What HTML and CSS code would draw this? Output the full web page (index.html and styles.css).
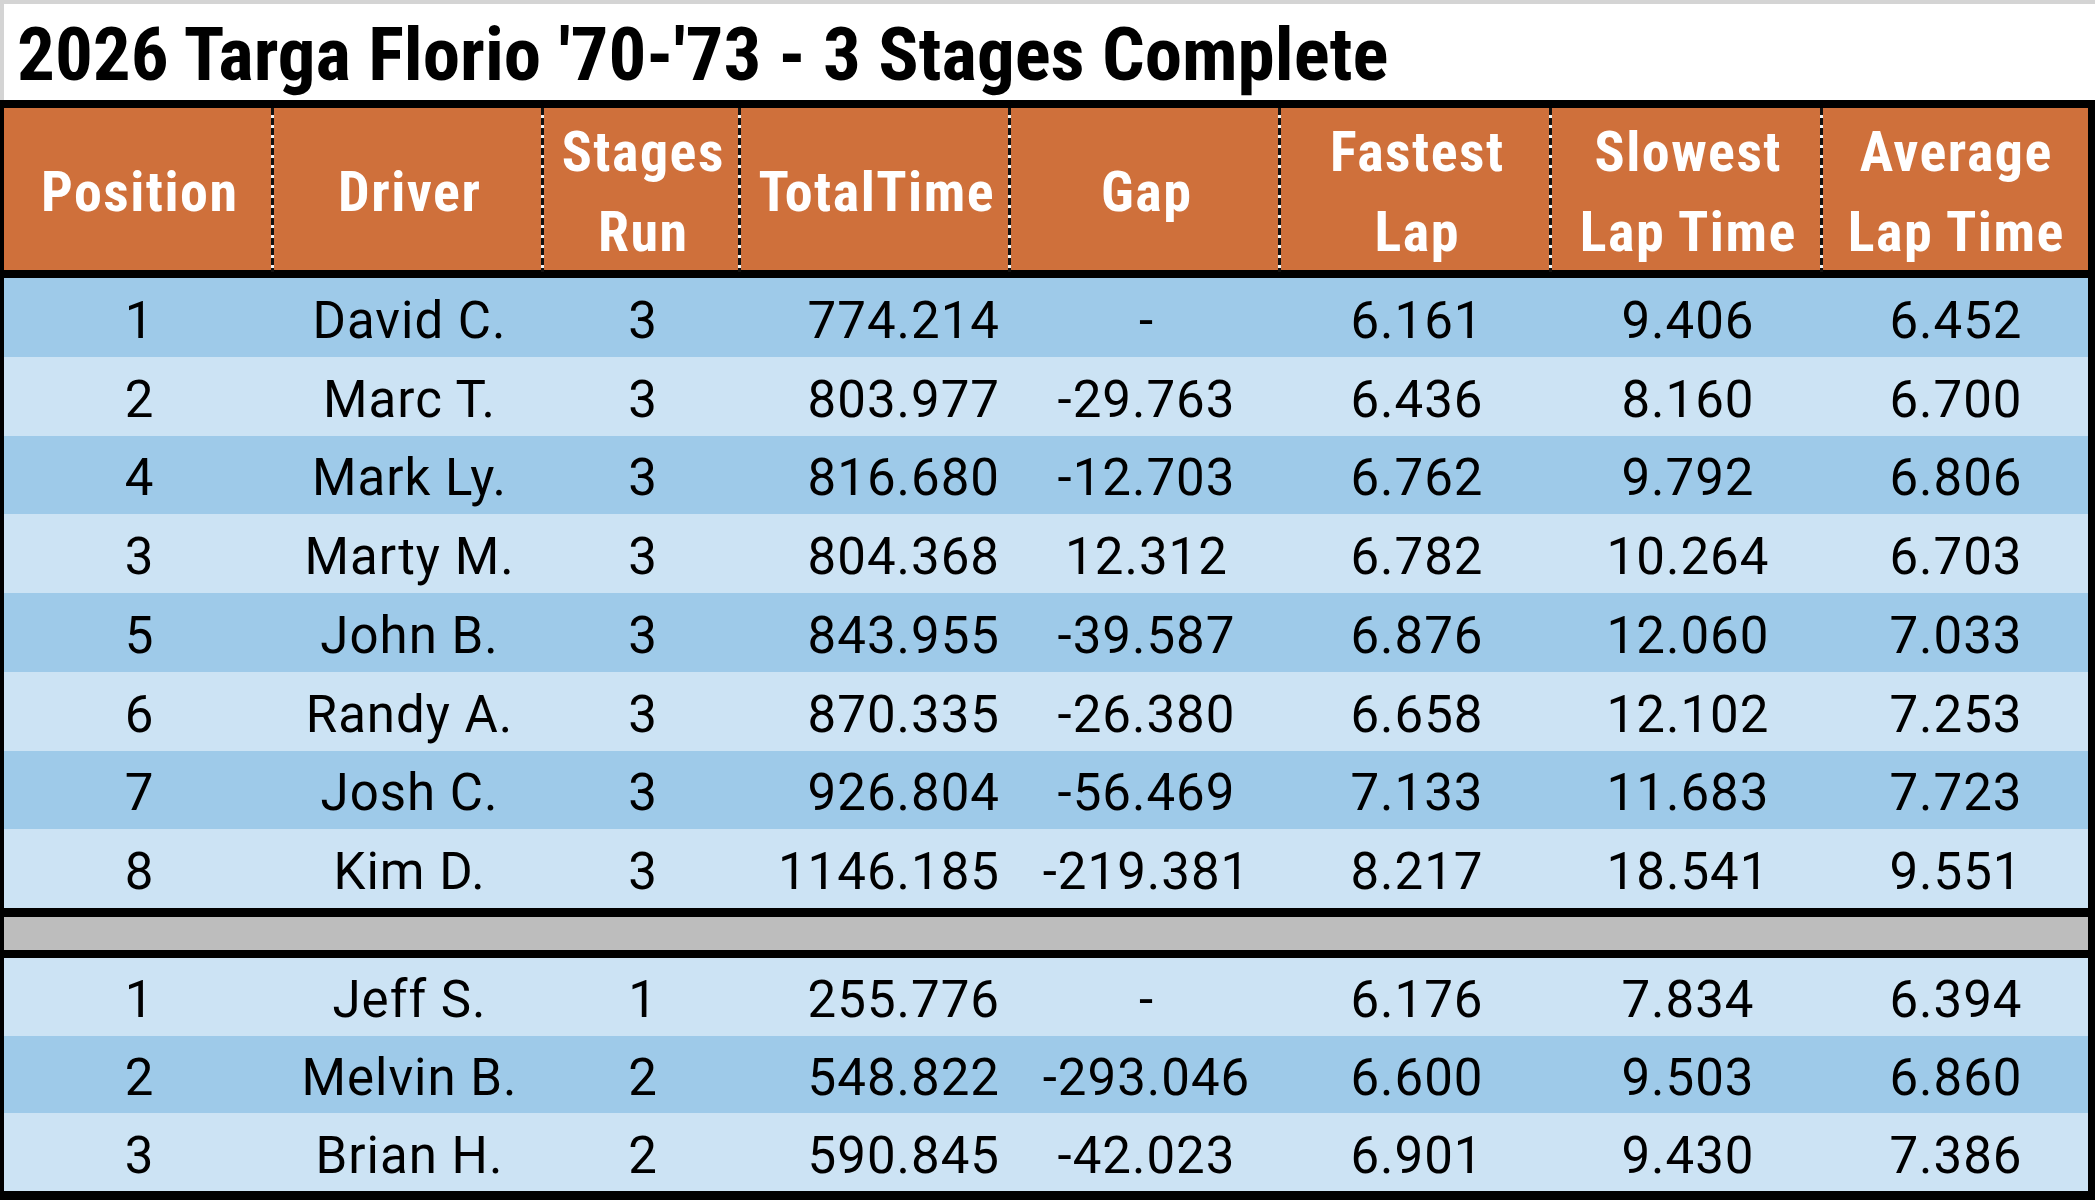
FILE: index.html
```html
<!DOCTYPE html>
<html lang="en">
<head>
<meta charset="utf-8">
<title>2026 Targa Florio '70-'73 - 3 Stages Complete</title>
<link rel="stylesheet" href="styles.css">
</head>
<body>
<div class="sheet">
  <h1 class="title">2026 Targa Florio '70-'73 - 3 Stages Complete</h1>
  <div class="results">
    <div class="row head">
      <div class="cell dash">Position</div>
      <div class="cell dash">Driver</div>
      <div class="cell dash">Stages<br>Run</div>
      <div class="cell dash">TotalTime</div>
      <div class="cell dash">Gap</div>
      <div class="cell dash">Fastest<br>Lap</div>
      <div class="cell dash">Slowest<br>Lap Time</div>
      <div class="cell">Average<br>Lap Time</div>
    </div>
    <div class="group main">
      <div class="row dark"><div class="cell">1</div><div class="cell">David C.</div><div class="cell">3</div><div class="cell num">774.214</div><div class="cell">-</div><div class="cell">6.161</div><div class="cell">9.406</div><div class="cell">6.452</div></div>
      <div class="row light"><div class="cell">2</div><div class="cell">Marc T.</div><div class="cell">3</div><div class="cell num">803.977</div><div class="cell">-29.763</div><div class="cell">6.436</div><div class="cell">8.160</div><div class="cell">6.700</div></div>
      <div class="row dark"><div class="cell">4</div><div class="cell">Mark Ly.</div><div class="cell">3</div><div class="cell num">816.680</div><div class="cell">-12.703</div><div class="cell">6.762</div><div class="cell">9.792</div><div class="cell">6.806</div></div>
      <div class="row light"><div class="cell">3</div><div class="cell">Marty M.</div><div class="cell">3</div><div class="cell num">804.368</div><div class="cell">12.312</div><div class="cell">6.782</div><div class="cell">10.264</div><div class="cell">6.703</div></div>
      <div class="row dark"><div class="cell">5</div><div class="cell">John B.</div><div class="cell">3</div><div class="cell num">843.955</div><div class="cell">-39.587</div><div class="cell">6.876</div><div class="cell">12.060</div><div class="cell">7.033</div></div>
      <div class="row light"><div class="cell">6</div><div class="cell">Randy A.</div><div class="cell">3</div><div class="cell num">870.335</div><div class="cell">-26.380</div><div class="cell">6.658</div><div class="cell">12.102</div><div class="cell">7.253</div></div>
      <div class="row dark"><div class="cell">7</div><div class="cell">Josh C.</div><div class="cell">3</div><div class="cell num">926.804</div><div class="cell">-56.469</div><div class="cell">7.133</div><div class="cell">11.683</div><div class="cell">7.723</div></div>
      <div class="row light"><div class="cell">8</div><div class="cell">Kim D.</div><div class="cell">3</div><div class="cell num">1146.185</div><div class="cell">-219.381</div><div class="cell">8.217</div><div class="cell">18.541</div><div class="cell">9.551</div></div>
    </div>
    <div class="separator"></div>
    <div class="group late">
      <div class="row light"><div class="cell">1</div><div class="cell">Jeff S.</div><div class="cell">1</div><div class="cell num">255.776</div><div class="cell">-</div><div class="cell">6.176</div><div class="cell">7.834</div><div class="cell">6.394</div></div>
      <div class="row dark"><div class="cell">2</div><div class="cell">Melvin B.</div><div class="cell">2</div><div class="cell num">548.822</div><div class="cell">-293.046</div><div class="cell">6.600</div><div class="cell">9.503</div><div class="cell">6.860</div></div>
      <div class="row light"><div class="cell">3</div><div class="cell">Brian H.</div><div class="cell">2</div><div class="cell num">590.845</div><div class="cell">-42.023</div><div class="cell">6.901</div><div class="cell">9.430</div><div class="cell">7.386</div></div>
    </div>
  </div>
</div>
</body>
</html>
```
FILE: styles.css
```css
* { box-sizing: border-box; }

html, body {
  margin: 0;
  padding: 0;
  background: #ffffff;
}

body {
  font-family: "Roboto Condensed", "Liberation Sans", sans-serif;
  color: #000;
}

.sheet {
  width: 2095px;
  height: 1200px;
  overflow: hidden;
}

.title {
  margin: 0;
  height: 100px;
  border-top: 4px solid #d4d4d4;
  border-left: 4px solid #d4d4d4;
  padding: 4px 0 0 13px;
  font-size: 75px;
  line-height: 92px;
  font-weight: 700;
  white-space: nowrap;
  background: #fff;
}

.results {
  border-top: 8px solid #000;
  border-left: 4px solid #000;
  border-right: 7px solid #000;
  border-bottom: 9px solid #000;
}

.row {
  display: grid;
  grid-template-columns: 270px 270px 197px 270px 270px 271px 271px 265px;
}

.head {
  height: 170px;
  border-bottom: 8px solid #000;
  background: #cf703b;
  color: #fff;
  font-weight: 700;
  font-size: 56px;
  line-height: 80px;
  letter-spacing: 1.5px;
}

.head .cell {
  display: flex;
  align-items: center;
  justify-content: center;
  text-align: center;
  padding-top: 4px;
  padding-left: 1.5px;
  white-space: nowrap;
}

.head .dash {
  background-image: repeating-linear-gradient(to bottom, #111 0 7px, #f2f2f2 7px 10px);
  background-size: 3px 100%;
  background-position: right top;
  background-repeat: no-repeat;
}

.main .row { height: 78.75px; }
.late .row { height: 77.67px; }

.dark { background: #9ecae9; }
.light { background: #cce3f4; }

.group .cell {
  display: flex;
  align-items: center;
  justify-content: center;
  padding-top: 6px;
  padding-left: 1px;
  font-family: Roboto, "Roboto Condensed", sans-serif;
  font-size: 51px;
  letter-spacing: 1px;
  white-space: nowrap;
}

.group .cell.num {
  justify-content: flex-end;
  padding-left: 0;
  padding-right: 11px;
}

.separator {
  height: 50px;
  border-top: 9px solid #000;
  border-bottom: 8px solid #000;
  background: #bdbdbd;
}
```
